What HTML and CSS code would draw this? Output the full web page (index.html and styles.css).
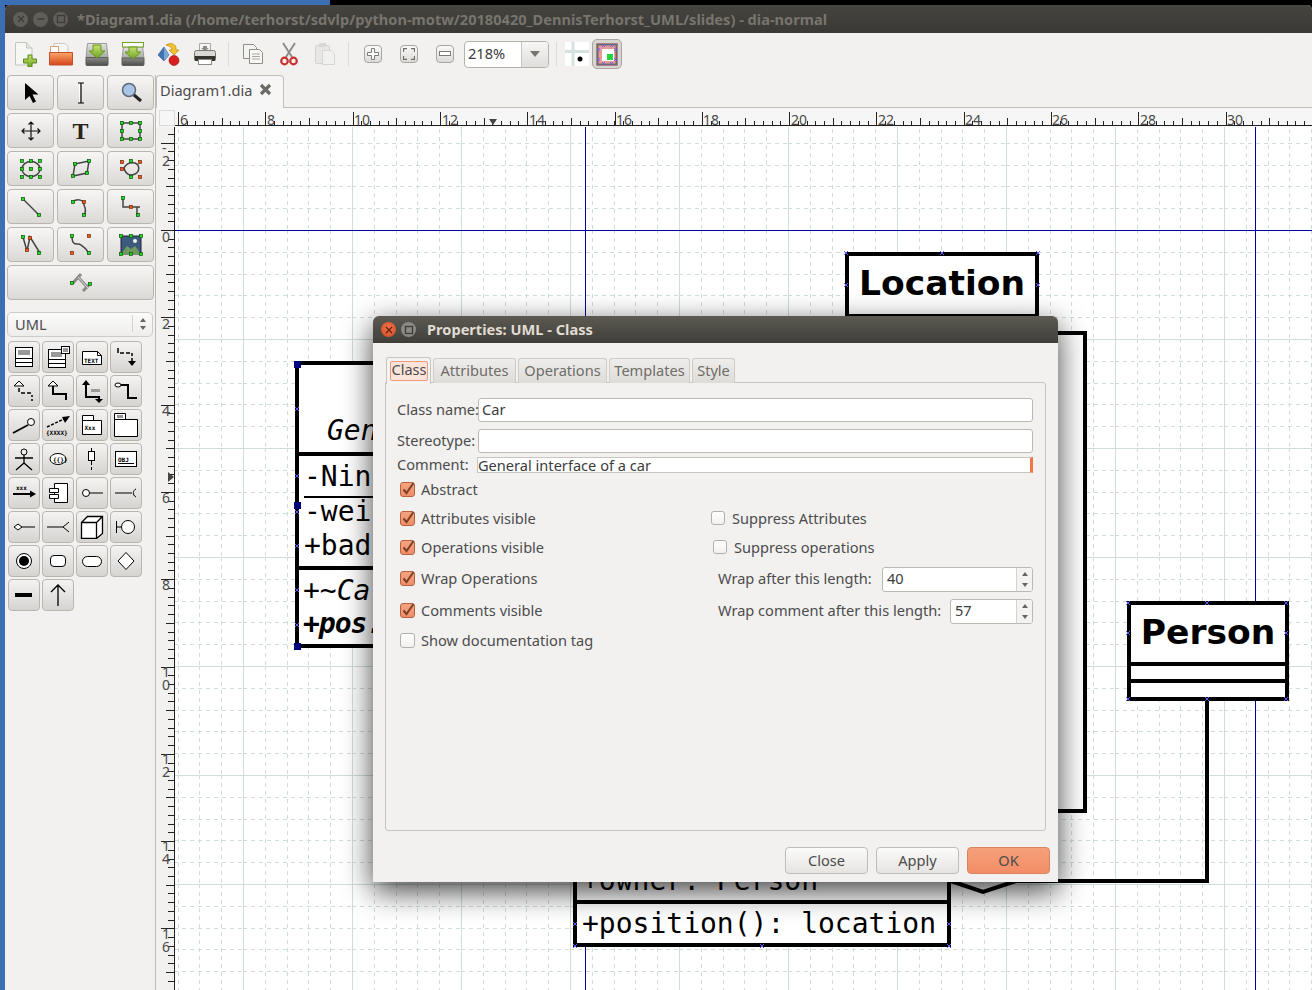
FILE: index.html
```html
<!DOCTYPE html>
<html>
<head>
  <meta charset="utf-8">
  <title>Diagram1.dia - dia-normal</title>
  <link rel="stylesheet" href="styles.css">
</head>
<body>
  <svg class="defs">
    <defs>
      <linearGradient id="gDrive" x1="0" y1="0" x2="0" y2="1"><stop offset="0" stop-color="#e4e4e0"/><stop offset="1" stop-color="#a9a9a4"/></linearGradient>
      <linearGradient id="gDriveLow" x1="0" y1="0" x2="0" y2="1"><stop offset="0" stop-color="#8a8a86"/><stop offset="1" stop-color="#4d4d4a"/></linearGradient>
      <linearGradient id="gGreen" x1="0" y1="0" x2="0" y2="1"><stop offset="0" stop-color="#c8e070"/><stop offset="1" stop-color="#6da520"/></linearGradient>
      <linearGradient id="gFolder" x1="0" y1="0" x2="0" y2="1"><stop offset="0" stop-color="#f8a86c"/><stop offset="1" stop-color="#d8431a"/></linearGradient>
      <path id="cp" d="M-2 -2L2 2M2 -2L-2 2"/>
    </defs>
  </svg>

  <div class="desktop-top"><div class="desktop-blue"></div></div>
  <div class="desktop">
    <div class="launcher"></div>
    <div class="window">
      <div class="titlebar">
        <span class="wm-btn"><svg width="10" height="10"><path d="M2 2l6 6M8 2l-6 6" stroke="#3c3b37" stroke-width="1.3"/></svg></span>
        <span class="wm-btn"><svg width="10" height="10"><path d="M1.5 5h7" stroke="#3c3b37" stroke-width="1.5"/></svg></span>
        <span class="wm-btn"><svg width="10" height="10"><rect x="1.5" y="1.5" width="7" height="7" fill="none" stroke="#3c3b37" stroke-width="1.3"/></svg></span>
        <span class="window-title">*Diagram1.dia (/home/terhorst/sdvlp/python-motw/20180420_DennisTerhorst_UML/slides) - dia-normal</span>
      </div>

      <div class="toolbar">
        <span class="slot"><svg width="24" height="26">
          <path d="M2.5 1.5h11l5.5 5.5v17h-16.500z" fill="#f6f6f3" stroke="#c4c4c0"/><path d="M13.500 1.500v5.500h5.500" fill="#e4e4e0" stroke="#c4c4c0"/>
          <path d="M15 14h4v4h4.500v4h-4.500v4h-4v-4h-4.500v-4h4.500z" fill="url(#gGreen)" stroke="#5c8a18"/>
        </svg></span>
        <span class="slot"><svg width="26" height="24">
          <path d="M6 1.500h11l3 3v8h-14z" fill="#f6f6f3" stroke="#c8c8c4"/><path d="M2.500 4.500h8v6h-8z" fill="#fff" stroke="#d6a070"/>
          <path d="M1.500 10.500h23v12.500h-23z" fill="url(#gFolder)" stroke="#c2502a"/>
        </svg></span>
        <span class="slot"><svg width="26" height="24">
          <path d="M3.500 1.500h19l1.500 14h-22z" fill="url(#gDrive)" stroke="#9a9a96"/><path d="M2 15.500h22v7a1 1 0 0 1-1 1h-20a1 1 0 0 1-1-1z" fill="url(#gDriveLow)" stroke="#5d5d5a"/>
          <path d="M9 3h8v6h4l-8 7-8-7h4z" fill="url(#gGreen)" stroke="#64961c"/>
        </svg></span>
        <span class="slot"><svg width="26" height="24">
          <path d="M3.500 5h19l1.500 11h-22z" fill="url(#gDrive)" stroke="#9a9a96"/><path d="M2 16h22v6.500a1 1 0 0 1-1 1h-20a1 1 0 0 1-1-1z" fill="url(#gDriveLow)" stroke="#5d5d5a"/>
          <rect x="2.500" y="0.500" width="21" height="4.500" fill="#fff" stroke="#6da520"/>
          <path d="M9 5h8v5h4l-8 7-8-7h4z" fill="url(#gGreen)" stroke="#64961c"/>
        </svg></span>
        <span class="slot"><svg width="24" height="24">
          <path d="M1 13l6-8 5 8-5 6z" fill="#3f74b0" stroke="#2a5488" stroke-width=".6"/><path d="M7 5l5 8-5 6z" fill="#7aa6d8"/>
          <path d="M9 3c5-3 11-1 10 5h3l-5 5-5-5h3c0-3-3-4-6-5z" fill="#f2c230" stroke="#b98c10" stroke-width=".7"/>
          <circle cx="17" cy="18.500" r="5" fill="#d9201e" stroke="#8e1010" stroke-width=".6"/>
        </svg></span>
        <span class="slot"><svg width="24" height="24">
          <path d="M6.500 1.500h11v8h-11z" fill="#f4f4f2" stroke="#a8a8a4"/><path d="M10 4h4v2h2l-4 3-4-3h2z" fill="#8a8a86"/>
          <rect x="1.500" y="8.500" width="21" height="9" rx="2" fill="#d8d8d4" stroke="#77776f"/>
          <rect x="1.500" y="14" width="21" height="5" rx="1" fill="#35352f"/><rect x="5.500" y="17.500" width="13" height="5" fill="#fff" stroke="#8a8a86"/>
        </svg></span>
        <span class="tool-sep"></span>
        <span class="slot"><svg width="22" height="22">
          <path d="M1.500 1.500h10l3 3v11h-13z" fill="#f3f3f0" stroke="#8f8f8a"/><path d="M7.500 6.500h10l3 3v11h-13z" fill="#f7f7f4" stroke="#8f8f8a"/>
          <path d="M10 11h8M10 13.500h8M10 16h8" stroke="#a8a8a4"/>
        </svg></span>
        <span class="slot"><svg width="18" height="24">
          <path d="M3 1l9 14M15 1l-9 14" stroke="#8d8d8d" stroke-width="2"/>
          <circle cx="4.500" cy="19" r="3.300" fill="none" stroke="#c8322e" stroke-width="2.200"/><circle cx="13.500" cy="19" r="3.300" fill="none" stroke="#c8322e" stroke-width="2.200"/>
        </svg></span>
        <span class="slot faded"><svg width="22" height="24">
          <rect x="1.500" y="3.500" width="14" height="18" rx="1" fill="#e2e2de" stroke="#bcbcb8"/><rect x="5" y="1" width="7" height="4" fill="#c8c8c4"/>
          <path d="M8.500 8.500h9l3 3v11h-12z" fill="#f0f0ee" stroke="#c4c4c0"/>
        </svg></span>
        <span class="tool-sep"></span>
        <span class="slot"><span class="zoom-btn"><svg width="12" height="12"><path d="M4.500 .5h3v4h4v3h-4v4h-3v-4h-4v-3h4z" fill="#fff" stroke="#7a7a76"/></svg></span></span>
        <span class="slot"><span class="zoom-btn"><svg width="12" height="12"><path d="M.5 4V.5H4M8 .5h3.500V4M11.500 8v3.500H8M4 11.500H.5V8" fill="none" stroke="#6f6f6b" stroke-width="1.300"/></svg></span></span>
        <span class="slot"><span class="zoom-btn"><svg width="12" height="6"><rect x=".5" y=".5" width="11" height="4" fill="#fff" stroke="#7a7a76"/></svg></span></span>
        <span class="zoom-combo"><span class="zoom-value">218%</span><span class="zoom-arrow"><svg width="10" height="6"><path d="M0 0h10l-5 6z" fill="#77776f"/></svg></span></span>
        <span class="tool-sep narrow"></span>
        <svg class="grid-toggle" width="24" height="24"><rect width="24" height="24" fill="#fff"/><path d="M8 0v24M0 9.500h24" stroke="#d4e2de" stroke-width="3"/><circle cx="15" cy="17" r="2.500" fill="#000"/></svg>
        <span class="snap-btn"><svg width="22" height="23">
          <rect x="0" y="0" width="22" height="23" fill="#e79a9a"/><rect x="1.500" y="1.500" width="19" height="20" fill="none" stroke="#6c6c6c" stroke-width="2"/>
          <rect x="6" y="6" width="12" height="12" fill="#fff"/><rect x="11" y="11" width="6" height="6" fill="#24d43c"/>
          <path d="M1 5l3 3M4 5l-3 3M1 15l3 3M4 15l-3 3M18 5l3 3M21 5l-3 3M18 15l3 3M21 15l-3 3M6 1l3 3M9 1l-3 3M14 1l3 3M17 1l-3 3M6 19l3 3M9 19l-3 3M14 19l3 3M17 19l-3 3" stroke="#5b5bff" stroke-width=".8"/>
        </svg></span>
      </div>

      <div class="workspace">
        <aside class="toolbox">
          <div class="tool-grid">
            <button class="tool"><svg width="24" height="24"><path d="M6 2v17l4.500-4 3.500 7 3-1.500-3.500-7h6z" fill="#000"/></svg></button>
            <button class="tool"><svg width="24" height="24"><path d="M9 2h6M12 2v20M9 22h6" stroke="#000" stroke-width="1.200" fill="none"/><path d="M10.500 3v18" stroke="#fff" stroke-width="1"/></svg></button>
            <button class="tool"><svg width="24" height="24"><circle cx="10" cy="9" r="6.500" fill="#a9c4e4" stroke="#5c6a78" stroke-width="1.500"/><path d="M15 14l7 6" stroke="#222" stroke-width="3"/></svg></button>
            <button class="tool"><svg width="24" height="24"><path d="M12 3v18M3 12h18M9.500 5.500L12 3l2.500 2.500M9.500 18.500L12 21l2.500-2.500M5.500 9.500L3 12l2.500 2.500M18.500 9.500L21 12l-2.500 2.500" fill="none" stroke="#111" stroke-width="1.200"/></svg></button>
            <button class="tool"><span class="t-glyph">T</span></button>
            <button class="tool"><svg width="24" height="24"><rect x="3" y="4" width="18" height="16" fill="none" stroke="#444" stroke-width="1.500"/><g class="hg"><rect x="1.500" y="2.500" width="3" height="3"/><rect x="10.500" y="2.500" width="3" height="3"/><rect x="19.500" y="2.500" width="3" height="3"/><rect x="1.500" y="10.500" width="3" height="3"/><rect x="19.500" y="10.500" width="3" height="3"/><rect x="1.500" y="18.500" width="3" height="3"/><rect x="10.500" y="18.500" width="3" height="3"/><rect x="19.500" y="18.500" width="3" height="3"/></g></svg></button>
            <button class="tool"><svg width="24" height="24"><ellipse cx="12" cy="12" rx="9" ry="7.500" fill="none" stroke="#444" stroke-width="1.500"/><g class="hg"><rect x="1.500" y="2.500" width="3" height="3"/><rect x="10.500" y="2.500" width="3" height="3"/><rect x="19.500" y="2.500" width="3" height="3"/><rect x="1.500" y="10.500" width="3" height="3"/><rect x="10.500" y="10.500" width="3" height="3"/><rect x="19.500" y="10.500" width="3" height="3"/><rect x="1.500" y="18.500" width="3" height="3"/><rect x="10.500" y="18.500" width="3" height="3"/><rect x="19.500" y="18.500" width="3" height="3"/></g></svg></button>
            <button class="tool"><svg width="24" height="24"><path d="M6 7l14-3-2 12-14 3z" fill="none" stroke="#444" stroke-width="1.500"/><g class="hg"><rect x="4.500" y="5.500" width="3" height="3"/><rect x="18.500" y="2.500" width="3" height="3"/><rect x="16.500" y="14.500" width="3" height="3"/><rect x="2.500" y="17.500" width="3" height="3"/></g></svg></button>
            <button class="tool"><svg width="24" height="24"><path d="M5 11c2-4 6-6 11-5 5 2 5 8 0 11-5 2-9 1-11-6z" fill="none" stroke="#444" stroke-width="1.500"/><g class="hg"><rect x="10.500" y="2.500" width="3" height="3"/><rect x="10.500" y="18.500" width="3" height="3"/></g><g class="hr"><rect x="1.500" y="3.500" width="3" height="3"/><rect x="19.500" y="3.500" width="3" height="3"/><rect x="1.500" y="10.500" width="3" height="3"/><rect x="19.500" y="18.500" width="3" height="3"/></g></svg></button>
            <button class="tool"><svg width="24" height="24"><path d="M4 4l16 16" stroke="#444" stroke-width="1.500"/><g class="hg"><rect x="2.500" y="2.500" width="3" height="3"/><rect x="18.500" y="18.500" width="3" height="3"/></g></svg></button>
            <button class="tool"><svg width="24" height="24"><path d="M3 7c6-4 12-2 12 3 2 4 2 7 0 11" fill="none" stroke="#444" stroke-width="1.500"/><g class="hg"><rect x="2.500" y="5.500" width="3" height="3"/><rect x="13.500" y="18.500" width="3" height="3"/></g><rect class="hr" x="13.500" y="5.500" width="3" height="3"/></svg></button>
            <button class="tool"><svg width="24" height="24"><path d="M4 3v9h14v9M18 12h3" fill="none" stroke="#444" stroke-width="1.500"/><g class="hg"><rect x="2.500" y="1.500" width="3" height="3"/><rect x="17.500" y="18.500" width="3" height="3"/></g><rect class="hr" x="10.500" y="10.500" width="3" height="3"/></svg></button>
            <button class="tool"><svg width="24" height="24"><path d="M4 4l4 14 3-14 10 16" fill="none" stroke="#444" stroke-width="1.500"/><g class="hg"><rect x="2.500" y="2.500" width="3" height="3"/><rect x="18.500" y="18.500" width="3" height="3"/></g><g class="hr"><rect x="6.500" y="15.500" width="3" height="3"/><rect x="9.500" y="3.500" width="3" height="3"/></g></svg></button>
            <button class="tool"><svg width="24" height="24"><path d="M3 3c0 12 6 6 9 9s4 1 8 9" fill="none" stroke="#444" stroke-width="1.500"/><g class="hg"><rect x="1.500" y="1.500" width="3" height="3"/><rect x="18.500" y="18.500" width="3" height="3"/></g><g class="hr"><rect x="18.500" y="1.500" width="3" height="3"/><rect x="1.500" y="18.500" width="3" height="3"/></g></svg></button>
            <button class="tool"><svg width="24" height="24"><rect x="2" y="3" width="20" height="18" fill="#3b5a7c" stroke="#223"/><circle cx="16" cy="8" r="2" fill="#f2f2f2"/><path d="M2 21l6-8 4 3 4-3 6 8z" fill="#6f9a5f"/><g class="hg"><rect x=".5" y="1.500" width="3" height="3"/><rect x="10.500" y="1.500" width="3" height="3"/><rect x="20.500" y="1.500" width="3" height="3"/><rect x=".5" y="19.500" width="3" height="3"/><rect x="10.500" y="19.500" width="3" height="3"/><rect x="20.500" y="19.500" width="3" height="3"/></g></svg></button>
            <button class="tool wide"><svg width="24" height="24"><path d="M9 6l10 11M4 12L12 3M14 20l6-6" stroke="#8a8a86" stroke-width="3"/><path d="M9 6l10 11" stroke="#dcdcd8" stroke-width="1"/><g class="hg"><rect x="1.500" y="10.500" width="3" height="3"/><rect x="19.500" y="11.500" width="3" height="3"/></g></svg></button>
          </div>
          <div class="sheet-select"><span>UML</span><span class="sheet-arrows"><svg width="8" height="14"><path d="M4 1l3 4H1zM4 13L1 9h6z" fill="#66665f"/></svg></span></div>
          <div class="sheet-grid">
            <button class="sheet"><svg width="24" height="24"><rect x="3.500" y="2.500" width="17" height="19" fill="#fff" stroke="#000"/><path d="M6 5h12v5H6z" fill="#999"/><path d="M3.500 13.500h17M3.500 17.500h17" stroke="#000"/></svg></button>
            <button class="sheet"><svg width="24" height="24"><rect x="2.500" y="4.500" width="17" height="18" fill="#fff" stroke="#000"/><path d="M5 7h11v5H5z" fill="#999"/><path d="M2.500 14.500h17M2.500 18.500h17" stroke="#000"/><rect x="15.500" y="1.500" width="8" height="7" fill="#fff" stroke="#000"/><path d="M17 3h5v4h-5z" fill="#999"/></svg></button>
            <button class="sheet"><svg width="24" height="24"><path d="M2.500 6.500h15l4 4v9h-19z" fill="#fff" stroke="#000"/><path d="M17.500 6.500v4h4" fill="none" stroke="#000"/><text class="pix" x="4" y="17.500">TEXT</text></svg></button>
            <button class="sheet"><svg width="24" height="24"><path d="M4 3v5M6 8h4M12 8h4M18 8v3M18 13v3" fill="none" stroke="#000" stroke-width="1.500"/><path d="M14 16h8l-4 5z" fill="#000"/></svg></button>
            <button class="sheet"><svg width="24" height="24"><path d="M7 2l5 5H2z" fill="#fff" stroke="#000"/><path d="M7 9v4M9 14h4M15 14h4M20 16v2M20 20v2" stroke="#000" stroke-width="1.500" fill="none"/></svg></button>
            <button class="sheet"><svg width="24" height="24"><path d="M7 2l5 5H2z" fill="#fff" stroke="#000"/><path d="M7 7v8h13v6" stroke="#000" stroke-width="2" fill="none"/></svg></button>
            <button class="sheet"><svg width="24" height="24"><path d="M6 4v14h13v3" stroke="#000" stroke-width="2" fill="none"/><path d="M2 6l4-5 4 5zM15 20h8l-4 4z" fill="#000"/><path d="M11 10h9v3h-9z" fill="#999"/></svg></button>
            <button class="sheet"><svg width="24" height="24"><ellipse cx="4" cy="6" rx="3" ry="2" fill="#fff" stroke="#000"/><path d="M7 6h7v13h9" fill="none" stroke="#000" stroke-width="2"/></svg></button>
            <button class="sheet"><svg width="24" height="24"><path d="M1 20l15-8" stroke="#000" stroke-width="1.800"/><circle cx="19" cy="9" r="3.500" fill="#fff" stroke="#000"/></svg></button>
            <button class="sheet"><svg width="24" height="24"><path d="M1 14l19-9" stroke="#000" stroke-width="1.500" stroke-dasharray="3 1.500"/><path d="M24 3l-8 1 3 6z" fill="#000"/><text class="pix" x="0" y="22">{XXXX}</text></svg></button>
            <button class="sheet"><svg width="24" height="24"><path d="M2.500 2.500h11v5h-11zM2.500 7.500h19v14h-19z" fill="#fff" stroke="#000"/><text class="pix" x="4.500" y="17">Xxx</text></svg></button>
            <button class="sheet"><svg width="24" height="24"><path d="M.5 .5h11v6h-11zM.5 6.500h23v17h-23z" fill="#fff" stroke="#000"/><path d="M3 2h6v3H3z" fill="#999"/></svg></button>
            <button class="sheet"><svg width="24" height="24"><circle cx="12" cy="5" r="3" fill="none" stroke="#000"/><path d="M12 8v8M3 11h18M12 16l-8 7M12 16l8 7" stroke="#000" stroke-width="1.300" fill="none"/></svg></button>
            <button class="sheet"><svg width="24" height="24"><ellipse cx="12" cy="12" rx="8" ry="5.500" fill="#fff" stroke="#000"/><text class="pix" x="7" y="14.500">{{}}</text></svg></button>
            <button class="sheet"><svg width="24" height="24"><rect x="8.500" y="4.500" width="6" height="9" fill="#fff" stroke="#000"/><path d="M11.500 1v3M11.500 14v4M11.500 20v3" stroke="#000"/></svg></button>
            <button class="sheet"><svg width="24" height="24"><rect x="1.500" y="4.500" width="21" height="15" fill="#fff" stroke="#000"/><text class="pix" x="4" y="15">OBJ</text><path d="M4 16.500h16" stroke="#000"/></svg></button>
            <button class="sheet"><svg width="24" height="24"><text class="pix" x="4" y="9">xxx</text><path d="M1 13h19" stroke="#000" stroke-width="2"/><path d="M24 13l-6-3.500v7z" fill="#000"/></svg></button>
            <button class="sheet"><svg width="24" height="24"><path d="M8.500 2.500h13v19h-13z" fill="#fff" stroke="#000"/><path d="M3.500 7.500h9v4h-9zM3.500 13.500h9v4h-9z" fill="#fff" stroke="#000"/></svg></button>
            <button class="sheet"><svg width="24" height="24"><circle cx="6" cy="12" r="3.500" fill="#fff" stroke="#000"/><path d="M9.500 12H23" stroke="#000"/></svg></button>
            <button class="sheet"><svg width="24" height="24"><path d="M1 12h17M22 8c-3 1-4 6 0 8" fill="none" stroke="#000"/></svg></button>
            <button class="sheet"><svg width="24" height="24"><path d="M6 9l4 3-4 3-4-3z" fill="#fff" stroke="#000"/><path d="M10 12h13" stroke="#000"/></svg></button>
            <button class="sheet"><svg width="24" height="24"><path d="M1 12h16M23 7l-6 5 6 5" fill="none" stroke="#000"/></svg></button>
            <button class="sheet"><svg width="24" height="24"><path d="M1.500 7.500l6-6h15v17l-6 5h-15zM1.500 7.500h15v16M16.500 7.500l6-6" fill="#fff" stroke="#000" stroke-width="1.300"/></svg></button>
            <button class="sheet"><svg width="24" height="24"><path d="M2.500 6v12M2.500 12h5" stroke="#000"/><circle cx="14" cy="12" r="6.500" fill="#fff" stroke="#000"/></svg></button>
            <button class="sheet"><svg width="24" height="24"><circle cx="12" cy="12" r="7.500" fill="#fff" stroke="#000"/><circle cx="12" cy="12" r="5" fill="#000"/></svg></button>
            <button class="sheet"><svg width="24" height="24"><rect x="4.500" y="6.500" width="15" height="11" rx="3.500" fill="#fff" stroke="#000"/></svg></button>
            <button class="sheet"><svg width="24" height="24"><rect x="2.500" y="7.500" width="19" height="10" rx="5" fill="#fff" stroke="#000"/></svg></button>
            <button class="sheet"><svg width="24" height="24"><path d="M12 3.500l8 8.500-8 8.500-8-8.500z" fill="#fff" stroke="#000"/></svg></button>
            <button class="sheet"><svg width="24" height="24"><rect x="3" y="10" width="17" height="4" fill="#000"/></svg></button>
            <button class="sheet"><svg width="24" height="24"><path d="M12 23V2M5 9l7-7 7 7" fill="none" stroke="#000" stroke-width="1.300"/></svg></button>
          </div>
        </aside>

        <main class="editor">
          <div class="tabstrip"><div class="doc-tab"><span>Diagram1.dia</span><svg width="13" height="13"><path d="M2 2l9 9M11 2l-9 9" stroke="#6a6a66" stroke-width="3.200"/></svg></div></div>
          <div class="ruler-row">
            <div class="ruler-corner"></div>
            <svg class="h-ruler" width="1137" height="19">
              <line class="tick" x1="3" y1="15" x2="1137" y2="15" stroke-width="4" stroke-dasharray="1 7.73"/>
              <line class="tick" x1="3" y1="13.500" x2="1137" y2="13.500" stroke-width="7" stroke-dasharray="1 42.65"/>
              <line class="tick" x1="3" y1="10.500" x2="1137" y2="10.500" stroke-width="13" stroke-dasharray="1 86.3"/>
              <line class="tick" x1="0" y1="17.500" x2="1137" y2="17.500"/>
              <g class="ruler-num">
                <text x="5" y="17">6</text><text x="92" y="17">8</text><text x="179" y="17">10</text><text x="267" y="17">12</text><text x="354" y="17">14</text><text x="441" y="17">16</text><text x="528" y="17">18</text><text x="616" y="17">20</text><text x="703" y="17">22</text><text x="790" y="17">24</text><text x="877" y="17">26</text><text x="965" y="17">28</text><text x="1052" y="17">30</text>
              </g>
              <path d="M314 11h8l-4 6z" fill="#444"/>
            </svg>
          </div>
          <div class="canvas-row">
            <svg class="v-ruler" width="16" height="863">
              <line class="tick" x1="12" y1="6.970" x2="12" y2="863" stroke-width="6" stroke-dasharray="1 7.73"/>
              <line class="tick" x1="11" y1="15.700" x2="11" y2="863" stroke-width="8" stroke-dasharray="1 42.65"/>
              <line class="tick" x1="8.500" y1="15.700" x2="8.500" y2="863" stroke-width="13" stroke-dasharray="1 86.3"/>
              <line class="tick" x1="15.500" y1="0" x2="15.500" y2="863"/>
              <g class="ruler-num">
                <text x="3" y="26">-</text><text x="3" y="39">2</text><text x="3" y="115">0</text><text x="3" y="202">2</text><text x="3" y="289">4</text><text x="3" y="376">6</text><text x="3" y="463">8</text>
                <text x="3" y="550">1</text><text x="3" y="563">0</text><text x="3" y="637">1</text><text x="3" y="650">2</text><text x="3" y="724">1</text><text x="3" y="737">4</text><text x="3" y="812">1</text><text x="3" y="825">6</text>
              </g>
              <path d="M9 345l6 5-6 5z" fill="#444"/>
            </svg>
            <div class="canvas">
              <svg class="layer" width="1137" height="863">
                <defs>
                  <pattern id="grid" patternUnits="userSpaceOnUse" x="68" y="103" width="109" height="109">
                    <g class="grid-dash">
                      <path d="M22.500 0v109M44.500 0v109M65.500 0v109M87.500 0v109M0 22.500h109M0 44.500h109M0 65.500h109M0 87.500h109"/>
                    </g>
                    <path class="grid-solid" d="M.5 0v109M0 .5h109"/>
                  </pattern>
                </defs>
                <rect width="1137" height="863" fill="url(#grid)"/>
                <path class="guide" d="M410.500 0v863M1080.500 0v863M0 103.500h1137"/>
                <path class="connector" d="M776 754l32 11 33-11-33-11z"/>
                <path class="connector open" d="M841 754h191V573"/>
              </svg>

              <div class="uml uml-location"><div class="uml-title">Location</div></div>
              <div class="uml uml-hidden"></div>
              <div class="uml uml-person">
                <div class="uml-title person-title">Person</div>
                <div class="uml-sep"></div>
                <div class="person-gap"></div>
                <div class="uml-sep"></div>
              </div>
              <div class="uml uml-left">
                <div class="left-head"><span class="mono oblique">Gen</span></div>
                <div class="uml-sep"></div>
                <div class="left-attrs">
                  <div class="mono underlined">-Nin</div>
                  <div class="mono tight">-wei</div>
                  <div class="mono spaced">+bad</div>
                </div>
                <div class="uml-sep"></div>
                <div class="left-ops">
                  <div class="mono oblique">+~Ca</div>
                  <div class="mono oblique strong">+pos.</div>
                </div>
              </div>
              <div class="uml uml-car">
                <div class="car-attrs"><div class="mono">+owner: Person</div></div>
                <div class="uml-sep"></div>
                <div class="mono car-ops">+position(): location</div>
              </div>

              <svg class="layer" width="1137" height="863">
                <g class="marks" transform="translate(-175 -127)">
                  <use href="#cp" x="846" y="253"/><use href="#cp" x="942" y="253"/><use href="#cp" x="1038" y="253"/><use href="#cp" x="846" y="285"/><use href="#cp" x="1038" y="285"/>
                  <use href="#cp" x="1128" y="603"/><use href="#cp" x="1207" y="603"/><use href="#cp" x="1286" y="603"/><use href="#cp" x="1128" y="633"/><use href="#cp" x="1286" y="633"/><use href="#cp" x="1128" y="699"/><use href="#cp" x="1207" y="699"/><use href="#cp" x="1286" y="699"/>
                  <use href="#cp" x="297" y="409"/><use href="#cp" x="297" y="476"/><use href="#cp" x="297" y="512"/><use href="#cp" x="297" y="546"/><use href="#cp" x="297" y="590"/><use href="#cp" x="297" y="625"/>
                  <use href="#cp" x="575" y="924"/><use href="#cp" x="949" y="924"/><use href="#cp" x="575" y="946"/><use href="#cp" x="762" y="946"/><use href="#cp" x="949" y="946"/>
                </g>
                <g class="handles" transform="translate(-175 -127)">
                  <rect x="294" y="361" width="7" height="7"/><rect x="294" y="502" width="7" height="7"/><rect x="294" y="643" width="7" height="7"/>
                </g>
              </svg>
            </div>
          </div>
        </main>
      </div>
    </div>
  </div>

  <!-- properties dialog, floats above the main window -->
  <section class="dialog">
    <header class="dialog-title">
      <span class="dlg-btn dlg-close"><svg width="8" height="8"><path d="M1 1l6 6M7 1L1 7" stroke="#5a2010" stroke-width="1.200"/></svg></span>
      <span class="dlg-btn dlg-max"><svg width="10" height="10"><rect x="1.500" y="1.500" width="7" height="7" fill="none" stroke="#3c3b37" stroke-width="1.300"/></svg></span>
      <span class="dlg-caption">Properties: UML - Class</span>
    </header>
    <div class="dialog-body">
      <div class="tabs">
        <div class="tab active"><span>Class</span></div>
        <div class="tab w-attr">Attributes</div>
        <div class="tab w-oper">Operations</div>
        <div class="tab w-temp">Templates</div>
        <div class="tab w-style">Style</div>
      </div>
      <div class="notebook">
        <div class="row field"><label class="name-label">Class name:</label><div class="entry">Car</div></div>
        <div class="row field gap7"><label class="name-label">Stereotype:</label><div class="entry"></div></div>
        <div class="row comment-row"><label class="comment-label">Comment:</label><div class="comment-box">General interface of a car</div></div>
        <div class="row check-row gap7"><span class="check on"><svg width="13" height="13"><path d="M2.500 6.500l3 3.500 7-10" fill="none" stroke="#7c4028" stroke-width="2"/></svg></span>Abstract</div>
        <div class="row check-row gap9">
          <div class="left-cell"><span class="check on"><svg width="13" height="13"><path d="M2.500 6.500l3 3.500 7-10" fill="none" stroke="#7c4028" stroke-width="2"/></svg></span>Attributes visible</div>
          <div class="right-cell"><span class="check small"></span>Suppress Attributes</div>
        </div>
        <div class="row check-row gap9">
          <div class="left-cell"><span class="check on"><svg width="13" height="13"><path d="M2.500 6.500l3 3.500 7-10" fill="none" stroke="#7c4028" stroke-width="2"/></svg></span>Operations visible</div>
          <div class="right-cell shift2"><span class="check small"></span>Suppress operations</div>
        </div>
        <div class="row spin-row gap9">
          <div class="left-cell"><span class="check on"><svg width="13" height="13"><path d="M2.500 6.500l3 3.500 7-10" fill="none" stroke="#7c4028" stroke-width="2"/></svg></span>Wrap Operations</div>
          <div class="right-cell shift7">
            <label class="wrap-label">Wrap after this length:</label>
            <div class="spin"><span class="spin-value">40</span><span class="stepper"><svg width="8" height="20"><path d="M4 3l3 4H1zM4 18l-3-4h6z" fill="#66665f"/></svg></span></div>
          </div>
        </div>
        <div class="row spin-row gap8">
          <div class="left-cell"><span class="check on"><svg width="13" height="13"><path d="M2.500 6.500l3 3.500 7-10" fill="none" stroke="#7c4028" stroke-width="2"/></svg></span>Comments visible</div>
          <div class="right-cell shift7">
            <label class="wrap-label long">Wrap comment after this length:</label>
            <div class="spin"><span class="spin-value">57</span><span class="stepper"><svg width="8" height="20"><path d="M4 3l3 4H1zM4 18l-3-4h6z" fill="#66665f"/></svg></span></div>
          </div>
        </div>
        <div class="row check-row gap8"><span class="check"></span>Show documentation tag</div>
      </div>
      <div class="actions">
        <button class="dlg-action">Close</button>
        <button class="dlg-action">Apply</button>
        <button class="dlg-action ok">OK</button>
      </div>
    </div>
  </section>
</body>
</html>
```

FILE: styles.css
```css
* {
  box-sizing: border-box;
}

body {
  margin: 0;
  width: 1312px;
  height: 990px;
  overflow: hidden;
  position: relative;
  background: #000;
  font-family: "Noto Sans", sans-serif;
  font-size: 14.6px;
  color: #4c4c4c;
}

button {
  font: inherit;
  color: inherit;
  padding: 0;
}

.defs {
  position: absolute;
  width: 0;
  height: 0;
}

/* desktop behind the window */
.desktop-top {
  height: 5px;
}
.desktop-blue {
  width: 330px;
  height: 5px;
  background: #3b6fb4;
}
.desktop {
  display: flex;
  height: 985px;
}
.launcher {
  width: 5px;
  background: #3b6fb4;
}
.window {
  flex: 1;
  min-width: 0;
  display: flex;
  flex-direction: column;
  background: #f2f1f0;
  border-radius: 5px 5px 0 0;
  overflow: hidden;
}

.titlebar {
  height: 28px;
  flex: none;
  display: flex;
  align-items: center;
  padding-left: 8px;
  gap: 5px;
  background: linear-gradient(#45443f, #3a3935);
}
.wm-btn {
  width: 15px;
  height: 15px;
  border-radius: 50%;
  background: #5f5e58;
  display: flex;
  align-items: center;
  justify-content: center;
}
.window-title {
  margin-left: 4px;
  font-weight: 700;
  color: #77756e;
  white-space: nowrap;
}

.toolbar {
  height: 42px;
  flex: none;
  display: flex;
  align-items: center;
  padding-left: 2px;
}
.slot {
  width: 36px;
  height: 36px;
  flex: none;
  display: flex;
  align-items: center;
  justify-content: center;
}
.slot.faded {
  opacity: .6;
}
.tool-sep {
  width: 1px;
  height: 24px;
  margin: 0 6px 0 5px;
  background: #dcdad6;
  flex: none;
}
.tool-sep.narrow {
  margin: 0 8px 0 7px;
}
.zoom-btn {
  width: 18px;
  height: 18px;
  border: 1px solid #a8a5a0;
  border-radius: 4px;
  background: linear-gradient(#fafafa, #dddbd8);
  display: flex;
  align-items: center;
  justify-content: center;
}
.zoom-combo {
  width: 85px;
  height: 27px;
  margin-left: 1px;
  flex: none;
  display: flex;
  border: 1px solid #b5b2ac;
  border-radius: 4px;
  background: #fff;
  overflow: hidden;
}
.zoom-value {
  width: 56px;
  padding: 0 0 2px 3px;
  line-height: 23px;
  color: #3c3c3c;
}
.zoom-arrow {
  flex: 1;
  border-left: 1px solid #c8c5c0;
  background: linear-gradient(#f6f6f5, #e0dedb);
  display: flex;
  align-items: center;
  justify-content: center;
}
.grid-toggle {
  flex: none;
}
.snap-btn {
  width: 30px;
  height: 30px;
  margin-left: 3px;
  flex: none;
  border: 1px solid #a8a5a0;
  border-radius: 5px;
  background: #d8d6d2;
  display: flex;
  align-items: center;
  justify-content: center;
}

.workspace {
  flex: 1;
  min-height: 0;
  display: flex;
}

/* left toolbox */
.toolbox {
  width: 151px;
  flex: none;
  border-right: 1px solid #bdbab4;
  padding: 0 0 0 2px;
}
.tool-grid {
  display: grid;
  grid-template-columns: repeat(3, 47px);
  grid-auto-rows: 35px;
  column-gap: 3px;
  row-gap: 3px;
}
.tool {
  border: 1px solid #b9b6b0;
  border-radius: 4px;
  background: linear-gradient(#f7f6f5, #dbd9d6);
  display: flex;
  align-items: center;
  justify-content: center;
}
.tool.wide {
  grid-column: span 3;
}
.t-glyph {
  font-family: "Liberation Serif", serif;
  font-weight: 700;
  font-size: 24px;
  line-height: 24px;
  color: #2a2418;
}
.hg rect, rect.hg {
  fill: #1fe01f;
  stroke: #0b4f0b;
  stroke-width: .7;
}
.hr rect, rect.hr {
  fill: #f25a14;
  stroke: #6a2a0b;
  stroke-width: .7;
}
.sheet-select {
  width: 146px;
  height: 25px;
  margin-top: 12px;
  border: 1px solid #cfccc7;
  border-radius: 5px;
  background: linear-gradient(#fbfbfa, #eeedeb);
  display: flex;
  align-items: center;
  justify-content: space-between;
  padding: 0 0 2px 7px;
}
.sheet-arrows {
  width: 20px;
  height: 17px;
  border-left: 1px solid #d5d2cd;
  display: flex;
  align-items: center;
  justify-content: center;
}
.sheet-grid {
  display: grid;
  grid-template-columns: repeat(4, 32px);
  grid-auto-rows: 32px;
  gap: 2px;
  margin: 4px 0 0 1px;
}
.sheet {
  border: 1px solid #b9b6b0;
  border-radius: 4px;
  background: linear-gradient(#f4f3f2, #d6d4d1);
  display: flex;
  align-items: center;
  justify-content: center;
}
.pix {
  font-family: "DejaVu Sans Mono", monospace;
  font-size: 6px;
  font-weight: 700;
  fill: #000;
}

/* document area */
.editor {
  flex: 1;
  min-width: 0;
  display: flex;
  flex-direction: column;
}
.tabstrip {
  height: 33px;
  flex: none;
  border-bottom: 1px solid #c2bfb9;
}
.doc-tab {
  width: 128px;
  height: 33px;
  border: 1px solid #c2bfb9;
  border-bottom: 0;
  border-radius: 4px 4px 0 0;
  background: #f7f6f6;
  display: flex;
  align-items: center;
  gap: 7px;
  padding: 0 0 5px 3px;
}
.ruler-row {
  height: 19px;
  flex: none;
  display: flex;
  background: #f7f6f6;
}
.ruler-corner {
  width: 16px;
  height: 16px;
  margin: 2px 0 0 3px;
  border: 1px solid #dcdad6;
  flex: none;
}
.h-ruler {
  flex: none;
  overflow: visible;
}
.canvas-row {
  flex: 1;
  min-height: 0;
  display: flex;
  padding-left: 3px;
  background: #f2f1f0;
}
.v-ruler {
  flex: none;
}
.tick {
  stroke: #222;
  shape-rendering: crispEdges;
}
.ruler-num text {
  font-size: 14px;
  fill: #4a4a4a;
}

/* diagram canvas */
.canvas {
  position: relative;
  flex: 1;
  background: #fff;
  overflow: hidden;
}
.layer {
  position: absolute;
  left: 0;
  top: 0;
}
.grid-dash path {
  fill: none;
  stroke: #cfded9;
  stroke-dasharray: 4 4;
  shape-rendering: crispEdges;
}
.grid-solid {
  fill: none;
  stroke: #cfded9;
  shape-rendering: crispEdges;
}
.guide {
  fill: none;
  stroke: #0000a0;
  shape-rendering: crispEdges;
}
.connector {
  fill: #fff;
  stroke: #000;
  stroke-width: 4;
}
.connector.open {
  fill: none;
}
.marks use {
  fill: none;
  stroke: #5a5aff;
  stroke-width: 1;
}
.handles rect {
  fill: #00007a;
}

.uml {
  position: absolute;
  border: 4px solid #000;
  background: #fff;
  color: #000;
  display: flex;
  flex-direction: column;
  overflow: hidden;
}
.uml-sep {
  height: 4px;
  flex: none;
  background: #000;
}
.uml-title {
  font-family: "DejaVu Sans", sans-serif;
  font-weight: 700;
  font-size: 34.500px;
  line-height: 54px;
  text-align: center;
}
.uml-location {
  left: 670px;
  top: 125px;
  width: 194px;
  height: 66px;
}
.uml-hidden {
  left: 525px;
  top: 204px;
  width: 387px;
  height: 482px;
}
.uml-person {
  left: 952px;
  top: 474px;
  width: 162px;
  height: 100px;
}
.person-title {
  height: 57px;
}
.person-gap {
  height: 13px;
  flex: none;
}
.mono {
  font-family: "DejaVu Sans Mono", monospace;
  font-size: 28px;
  line-height: 34px;
  white-space: nowrap;
}
.oblique {
  font-style: italic;
}
.strong {
  font-weight: 700;
  letter-spacing: -1px;
}
.uml-left {
  left: 120px;
  top: 234px;
  width: 300px;
  height: 287px;
}
.left-head {
  height: 87px;
  flex: none;
  padding: 0 0 4px 28px;
  display: flex;
  align-items: flex-end;
}
.left-attrs {
  height: 110px;
  flex: none;
  padding: 4px 0 0 5px;
}
.underlined {
  height: 38px;
  border-bottom: 2px solid #000;
}
.tight {
  margin-top: 1px;
  line-height: 25px;
}
.spaced {
  margin-top: 5px;
}
.left-ops {
  padding: 4px 0 0 4px;
}
.left-ops .mono {
  height: 33px;
}
.uml-car {
  left: 398px;
  top: 573px;
  width: 378px;
  height: 247px;
}
.car-attrs {
  flex: 1;
  padding: 0 0 2px 5px;
  display: flex;
  flex-direction: column;
  justify-content: flex-end;
}
.car-ops {
  height: 39px;
  padding: 3px 0 0 5px;
}

/* properties dialog */
.dialog {
  position: absolute;
  left: 373px;
  top: 316px;
  width: 685px;
  height: 566px;
  border-radius: 6px 6px 0 0;
  background: #f2f1f0;
  box-shadow: 0 9px 30px rgba(0, 0, 0, .75);
  display: flex;
  flex-direction: column;
}
.dialog-title {
  height: 27px;
  flex: none;
  display: flex;
  align-items: center;
  padding-left: 8px;
  border-radius: 6px 6px 0 0;
  background: linear-gradient(#5c5a52, #3f3e39);
}
.dlg-btn {
  width: 15px;
  height: 15px;
  border-radius: 50%;
  display: flex;
  align-items: center;
  justify-content: center;
}
.dlg-close {
  background: radial-gradient(circle at 50% 40%, #f2744a, #d04a22);
}
.dlg-max {
  margin-left: 5px;
  background: #8b8a83;
}
.dlg-caption {
  margin: 0 0 2px 11px;
  font-weight: 700;
  color: #e0dcd3;
}
.dialog-body {
  flex: 1;
  min-height: 0;
  padding: 14px 12px 0 12px;
  display: flex;
  flex-direction: column;
}
.tabs {
  height: 25px;
  flex: none;
  display: flex;
  gap: 2px;
  padding-left: 1px;
  position: relative;
  z-index: 1;
  color: #6f6d68;
}
.tab {
  height: 25px;
  margin-top: 1px;
  border: 1px solid #cfccc7;
  border-bottom: 0;
  border-radius: 3px 3px 0 0;
  background: linear-gradient(#eeedeb, #dedcd9);
  text-align: center;
  line-height: 22px;
}
.tab.active {
  width: 45px;
  height: 27px;
  margin-top: 0;
  background: #f4f3f2;
  border-color: #c8c5c0;
  padding: 3px 2px 0 3px;
  color: #4c4c4c;
}
.tab.active span {
  display: block;
  height: 20px;
  line-height: 15px;
  border: 1px solid #ee9a7c;
  border-radius: 2px;
  background: #fae4da;
}
.w-attr { width: 83px; }
.w-oper { width: 89px; }
.w-temp { width: 81px; }
.w-style { width: 43px; }
.notebook {
  height: 449px;
  flex: none;
  border: 1px solid #c8c5c0;
  border-radius: 0 3px 3px 3px;
  background: #f2f1f0;
  padding: 15px 12px 0 11px;
}
.row {
  display: flex;
  align-items: center;
  white-space: nowrap;
}
.field {
  height: 24px;
}
.name-label {
  width: 81px;
  flex: none;
  margin-bottom: 2px;
}
.entry {
  flex: 1;
  height: 24px;
  border: 1px solid #bcb9b3;
  border-radius: 3px;
  background: #fff;
  line-height: 20px;
  padding-left: 3px;
  color: #3c3c3c;
}
.gap7 { margin-top: 7px; }
.gap8 { margin-top: 8px; }
.gap9 { margin-top: 9px; }
.comment-row {
  height: 16px;
  margin-top: 4px;
}
.comment-label {
  width: 80px;
  flex: none;
  margin-bottom: 2px;
}
.comment-box {
  flex: 1;
  height: 16px;
  border: 1px solid #c8c5c0;
  border-right: 3px solid #f07746;
  background: #fff;
  line-height: 14px;
  color: #3c3c3c;
}
.check-row {
  height: 20px;
  padding-bottom: 2px;
}
.spin-row {
  height: 24px;
}
.check-row > .check {
  margin-left: 3px;
}
.left-cell {
  width: 314px;
  flex: none;
  display: flex;
  align-items: center;
  padding-left: 3px;
}
.spin-row .left-cell {
  margin-bottom: 2px;
}
.right-cell {
  flex: 1;
  display: flex;
  align-items: center;
}
.shift2 { padding-left: 2px; }
.shift7 { padding-left: 7px; }
.check {
  width: 15px;
  height: 15px;
  flex: none;
  margin-right: 6px;
  border: 1px solid #b3b0aa;
  border-radius: 3px;
  background: linear-gradient(#fff, #f2f1f0);
}
.check.small {
  width: 14px;
  height: 14px;
  margin-right: 7px;
}
.check.on {
  border-color: #b8603c;
  background: linear-gradient(#f4a480, #ee8e68);
}
.check svg {
  display: block;
  overflow: visible;
}
.wrap-label {
  width: 164px;
  flex: none;
  margin-bottom: 2px;
}
.wrap-label.long {
  width: 232px;
}
.spin {
  flex: 1;
  height: 25px;
  display: flex;
  border: 1px solid #bcb9b3;
  border-radius: 3px;
  background: #fff;
  overflow: hidden;
}
.spin-value {
  flex: 1;
  padding-left: 4px;
  line-height: 21px;
  color: #3c3c3c;
}
.stepper {
  width: 16px;
  flex: none;
  border-left: 1px solid #d5d2cd;
  background: #f4f3f2;
  display: flex;
  align-items: center;
  justify-content: center;
}
.actions {
  display: flex;
  justify-content: flex-end;
  gap: 8px;
  margin: 16px -4px 0 0;
}
.dlg-action {
  width: 83px;
  height: 27px;
  padding-bottom: 2px;
  border: 1px solid #c0bdb8;
  border-radius: 4px;
  background: linear-gradient(#fbfbfa, #e6e4e1);
}
.dlg-action.ok {
  border-color: #d98461;
  background: linear-gradient(#f6a07c, #f28d66);
}
```
